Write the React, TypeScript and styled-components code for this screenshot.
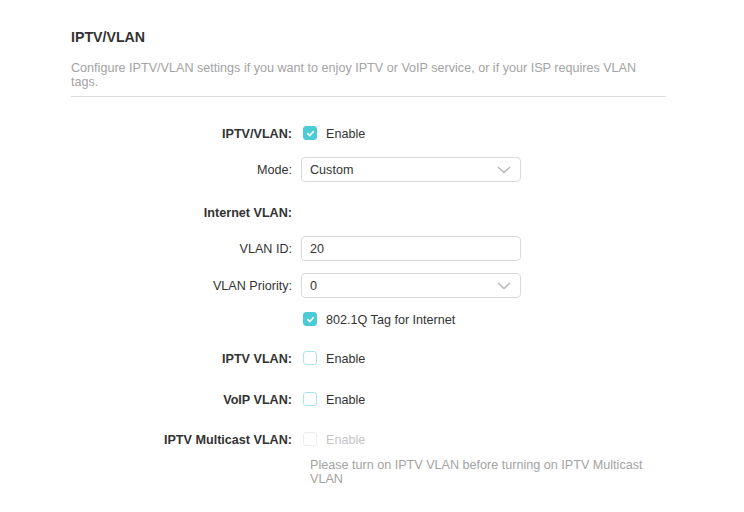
import styled, { createGlobalStyle } from "styled-components";

const GlobalStyle = createGlobalStyle`
  html, body {
    margin: 0;
    padding: 0;
    background: #ffffff;
  }
  body {
    font-family: "Liberation Sans", Arial, sans-serif;
    color: #333333;
  }
`;

function CheckMark() {
  return (
    <svg width="9" height="9" viewBox="0 0 10 10" fill="none">
      <path
        d="M2 5.2 L4.2 7.3 L8 3"
        stroke="#ffffff"
        strokeWidth="1.8"
        strokeLinecap="round"
        strokeLinejoin="round"
      />
    </svg>
  );
}

function Chevron() {
  return (
    <svg width="14" height="8" viewBox="0 0 14 8" fill="none">
      <path d="M1 1 L7 6.5 L13 1" stroke="#b8b8b8" strokeWidth="1.4" />
    </svg>
  );
}

type CheckState = "on" | "off" | "disabled";

function Check({ state, label }: { state: CheckState; label: string }) {
  return (
    <CheckLine>
      <Box $state={state}>{state === "on" && <CheckMark />}</Box>
      <CheckText $disabled={state === "disabled"}>{label}</CheckText>
    </CheckLine>
  );
}

function App() {
  return (
    <>
      <GlobalStyle />
      <Page>
        <Title>IPTV/VLAN</Title>
        <Desc>
          Configure IPTV/VLAN settings if you want to enjoy IPTV or VoIP service, or if your ISP
          requires VLAN tags.
        </Desc>
        <Divider />

        <Form>
          <Row $top={23}>
            <Label $bold>IPTV/VLAN:</Label>
            <Check state="on" label="Enable" />
          </Row>
          <Row $top={10}>
            <Label>Mode:</Label>
            <Select>
              <span>Custom</span>
              <Chevron />
            </Select>
          </Row>
          <Row $top={17}>
            <Label $bold>Internet VLAN:</Label>
          </Row>
          <Row $top={10}>
            <Label>VLAN ID:</Label>
            <Input>20</Input>
          </Row>
          <Row $top={11}>
            <Label>VLAN Priority:</Label>
            <Select>
              <span>0</span>
              <Chevron />
            </Select>
          </Row>
          <Row $top={8}>
            <Label />
            <Check state="on" label="802.1Q Tag for Internet" />
          </Row>
          <Row $top={13}>
            <Label $bold>IPTV VLAN:</Label>
            <Check state="off" label="Enable" />
          </Row>
          <Row $top={15}>
            <Label $bold>VoIP VLAN:</Label>
            <Check state="off" label="Enable" />
          </Row>
          <Row $top={14}>
            <Label $bold>IPTV Multicast VLAN:</Label>
            <Check state="disabled" label="Enable" />
          </Row>
          <NoteRow>
            <Label />
            <Note>Please turn on IPTV VLAN before turning on IPTV Multicast VLAN</Note>
          </NoteRow>
        </Form>
      </Page>
    </>
  );
}

const Page = styled.div`
  width: 595px;
  padding: 27px 0 0 71px;
`;
const Title = styled.h2`
  margin: 0;
  font-size: 14.2px;
  font-weight: bold;
  line-height: 20px;
  color: #333333;
`;
const Desc = styled.p`
  margin: 14px 0 0 0;
  font-size: 12.6px;
  line-height: 14px;
  color: #a3a3a3;
  padding-right: 20px;
`;
const Divider = styled.div`
  margin-top: 7px;
  height: 1px;
  background: #dcdcdc;
`;
const Form = styled.div`
  display: flex;
  flex-direction: column;
`;
const Row = styled.div<{ $top: number }>`
  display: flex;
  align-items: center;
  height: 26px;
  margin-top: ${(p) => p.$top}px;
`;
const NoteRow = styled.div`
  display: flex;
  margin-top: 6px;
`;
const Label = styled.div<{ $bold?: boolean }>`
  width: 230px;
  flex: none;
  text-align: right;
  padding: 2px 9px 0 0;
  box-sizing: border-box;
  font-size: 12.6px;
  font-weight: ${(p) => (p.$bold ? "bold" : "normal")};
  color: #333333;
`;
const CheckLine = styled.div`
  display: flex;
  align-items: center;
  padding-left: 2px;
`;
const Box = styled.div<{ $state: CheckState }>`
  width: 14px;
  height: 14px;
  box-sizing: border-box;
  border-radius: 3px;
  display: flex;
  align-items: center;
  justify-content: center;
  background: ${(p) => (p.$state === "on" ? "#4acbd6" : "#ffffff")};
  border: 1px solid
    ${(p) =>
      p.$state === "on" ? "#4acbd6" : p.$state === "off" ? "#a9e5eb" : "#ececec"};
`;
const CheckText = styled.span<{ $disabled?: boolean }>`
  margin-left: 9px;
  padding-top: 2px;
  font-size: 12.6px;
  color: ${(p) => (p.$disabled ? "#c4c4c4" : "#333333")};
`;
const Field = styled.div`
  width: 220px;
  height: 25px;
  box-sizing: border-box;
  border: 1px solid #d9d9d9;
  border-radius: 4px;
  display: flex;
  align-items: center;
  padding: 2px 8px 0;
  font-size: 12.6px;
  color: #333333;
`;
const Select = styled(Field)`
  justify-content: space-between;
  padding-right: 9px;
`;
const Input = styled(Field)``;
const Note = styled.div`
  width: 340px;
  padding-left: 9px;
  font-size: 12.6px;
  line-height: 14px;
  color: #a3a3a3;
`;

export default App;
